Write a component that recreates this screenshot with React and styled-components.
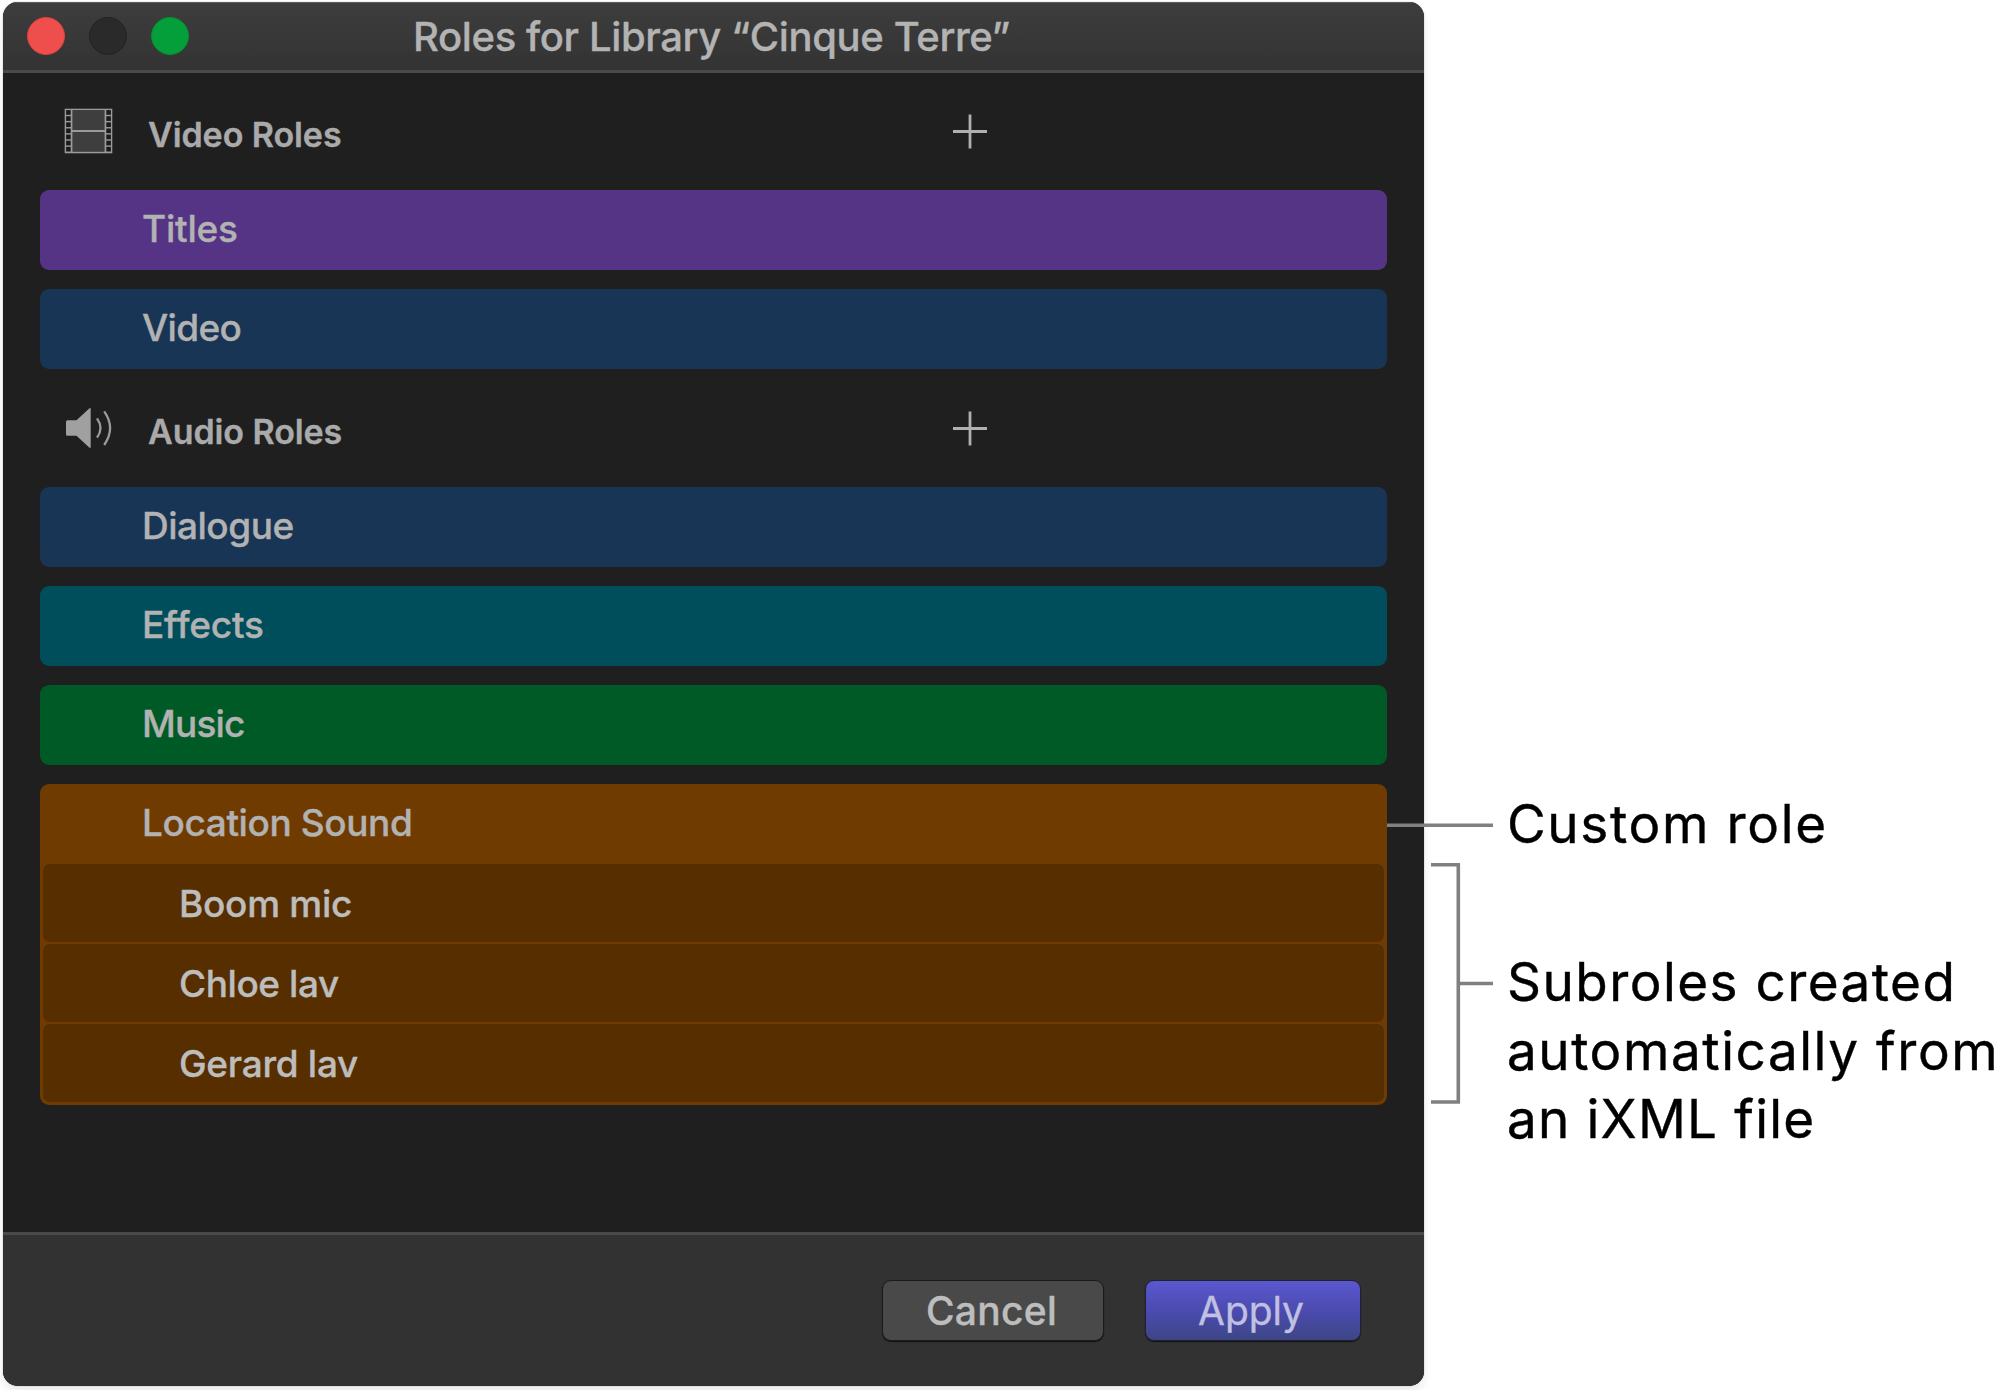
import React from "react";
import styled, { createGlobalStyle } from "styled-components";

const GlobalStyle = createGlobalStyle`
  *, *::before, *::after { box-sizing: border-box; }
  body {
    margin: 0;
    background: #fff;
    font-family: Inter, "Liberation Sans", sans-serif;
  }
`;

const Page = styled.main`
  display: flex;
  width: 2000px;
  height: 1390px;
  padding: 2px 0 0 3px;
  overflow: hidden;
`;

const Window = styled.section`
  display: flex;
  flex-direction: column;
  flex: none;
  width: 1421px;
  height: 1384px;
  border-radius: 15px;
  background: #1f1f1f;
  overflow: hidden;
  box-shadow: 0 0 1px #0009, 0 6px 10px #00000014;
  -webkit-text-stroke-width: 0.35px;
`;

const TitleBar = styled.header`
  display: flex;
  align-items: center;
  flex: none;
  height: 71px;
  padding: 0 24px 1px;
  border-top: 1px solid #5c5c5c;
  border-bottom: 3px solid #4a4a4a;
  background: linear-gradient(#3d3d3d, #333);
`;

const Lights = styled.div`
  display: flex;
  gap: 24px;
  width: 180px;
`;

const Light = styled.span`
  width: 38px;
  height: 38px;
  border-radius: 50%;
  border: 1px solid ${(p) => p.$rim};
  background: ${(p) => p.$color};
`;

const Title = styled.h1`
  flex: 1;
  margin: 1px 184px 0 0;
  color: #b3b3b3;
  font-size: 40px;
  font-weight: 500;
  line-height: 48px;
  letter-spacing: -0.37px;
  text-align: center;
  white-space: nowrap;
`;

const Body = styled.div`
  flex: 1;
  padding: 0 37px;
`;

const GroupHeader = styled.div`
  display: grid;
  grid-template-columns: 49px 1fr 34px 400px;
  align-items: center;
  height: ${(p) => p.$height}px;
  padding: 0 0 ${(p) => (p.$height === 117 ? 1 : 0)}px 24px;
`;

const GroupName = styled.h2`
  margin: 8px 0 0 35px;
  color: #aaa;
  font-size: 34px;
  font-weight: 600;
  line-height: 40px;
  letter-spacing: -0.08px;
`;

const AddButton = styled.button`
  display: flex;
  padding: 0;
  border: 0;
  background: none;
`;

const RoleList = styled.div`
  display: flex;
  flex-direction: column;
  gap: 19px;
`;

const Role = styled.div`
  border-radius: 9px;
  background: ${(p) => p.$color};
`;

const RoleName = styled.div`
  height: 80px;
  padding-left: 102px;
  color: #b2b2b2;
  font-size: 37px;
  font-weight: 500;
  line-height: 77px;
  letter-spacing: ${(p) => p.$tracking}px;
`;

const Subroles = styled.div`
  display: flex;
  flex-direction: column;
  gap: 2.5px;
  padding: 0 3px 3px;
`;

const Subrole = styled.div`
  height: 77.66px;
  padding-left: 136px;
  border-radius: 7px;
  background: #562e00;
  color: #bdbdbd;
  font-size: 37px;
  font-weight: 500;
  line-height: 79px;
  letter-spacing: ${(p) => p.$tracking}px;
`;

const Footer = styled.footer`
  display: flex;
  justify-content: flex-end;
  align-items: flex-start;
  gap: 41px;
  flex: none;
  height: 154px;
  padding: 45px 63px 0 0;
  border-top: 3px solid #4a4a4a;
  background: #323232;
`;

const Button = styled.button`
  width: ${(p) => (p.$primary ? 216 : 222)}px;
  height: 61px;
  padding: 0 ${(p) => (p.$primary ? 4 : 3)}px 0 0;
  border: 1px solid ${(p) => (p.$primary ? "#1f1f38" : "#1b1b1b")};
  border-radius: 9px;
  background: ${(p) => (p.$primary ? "linear-gradient(#5b58cf, #4b4bb0 50%, #3d4684)" : "#494949")};
  box-shadow: 0 1px 1px #111;
  color: ${(p) => (p.$primary ? "#c0c0e2" : "#bdbdbd")};
  font: ${(p) => (p.$primary ? 400 : 500)} 39px/58px Inter, "Liberation Sans", sans-serif;
  letter-spacing: ${(p) => (p.$primary ? -0.08 : 0.25)}px;
`;

const Callouts = styled.aside`
  position: relative;
  flex: none;
  width: 613px;
  margin-left: -37px;
  padding-top: 789px;
`;

const Callout = styled.div`
  display: flex;
  align-items: flex-start;
  gap: 14px;
  padding-left: ${(p) => p.$indent}px;
  height: ${(p) => p.$height}px;
`;

const Leader = styled.svg`
  flex: none;
  fill: none;
  stroke: #808080;
  stroke-width: 3.6;
`;

const CalloutText = styled.p`
  margin: ${(p) => p.$top}px 0 0;
  color: #000;
  font-size: 53px;
  line-height: 68.7px;
  white-space: nowrap;
  -webkit-text-stroke-width: 0.4px;
`;

const Line = styled.span`
  display: block;
  letter-spacing: ${(p) => p.$tracking}px;
`;

const holes = [0, 1, 2, 3, 4, 5, 6];

const FilmIcon = () => (
  <svg width="49" height="46" viewBox="0 0 49 46">
    <rect x="0.7" y="0.7" width="47.6" height="44.6" fill="#9a9a9a" />
    <rect x="8.4" y="2" width="32.2" height="20" fill="#3e3e3e" />
    <rect x="8.4" y="24" width="32.2" height="19.8" fill="#3e3e3e" />
    {holes.map((i) => (
      <React.Fragment key={i}>
        <rect x="2.1" y={2.1 + i * 6.12} width="4.6" height="4.7" fill="#1b1b1b" />
        <rect x="42.3" y={2.1 + i * 6.12} width="4.6" height="4.7" fill="#1b1b1b" />
      </React.Fragment>
    ))}
  </svg>
);

const SpeakerIcon = () => (
  <svg width="49" height="42" viewBox="0 0 49 42">
    <path d="M3.5 13.2H12.5L25.2 1.4Q26.7 0.3 26.7 2V40Q26.7 41.7 25.2 40.6L12.5 28.8H3.5Q2 28.8 2 27.3V14.7Q2 13.2 3.5 13.2Z" fill="#a0a0a0" />
    <path d="M33 11.3Q40 21 33 30.7M40.2 4.3Q52 21 40.2 38" fill="none" stroke="#9a9a9a" strokeWidth="2.3" />
  </svg>
);

const Add = ({ label }) => (
  <AddButton aria-label={label}>
    <svg width="34" height="35" viewBox="0 0 34 35">
      <path d="M17 0.5V34.5M0 17.5H34" stroke="#b0b0b0" strokeWidth="2.8" />
    </svg>
  </AddButton>
);

const videoRoles = [
  { name: "Titles", color: "#553486", tracking: -0.23 },
  { name: "Video", color: "#183556", tracking: -0.65 },
];

const audioRoles = [
  { name: "Dialogue", color: "#183556", tracking: -0.5 },
  { name: "Effects", color: "#004d5c", tracking: -0.21 },
  { name: "Music", color: "#005a26", tracking: -0.82 },
  {
    name: "Location Sound",
    color: "#703b00",
    tracking: -0.4,
    subroles: [
      { name: "Boom mic", tracking: -0.27 },
      { name: "Chloe lav", tracking: -0.43 },
      { name: "Gerard lav", tracking: -0.29 },
    ],
  },
];

const Roles = ({ roles }) => (
  <RoleList>
    {roles.map((r) => (
      <Role key={r.name} $color={r.color}>
        <RoleName $tracking={r.tracking}>{r.name}</RoleName>
        {r.subroles && (
          <Subroles>
            {r.subroles.map((s) => (
              <Subrole key={s.name} $tracking={s.tracking}>{s.name}</Subrole>
            ))}
          </Subroles>
        )}
      </Role>
    ))}
  </RoleList>
);

export default function App() {
  return (
    <Page>
      <GlobalStyle />
      <Window>
        <TitleBar>
          <Lights>
            <Light $color="#ee4e4c" $rim="#d94140" />
            <Light $color="#2a2a2a" $rim="#232323" />
            <Light $color="#049f3a" $rim="#058d34" />
          </Lights>
          <Title>Roles for Library “Cinque Terre”</Title>
        </TitleBar>
        <Body>
          <GroupHeader $height={117}>
            <FilmIcon />
            <GroupName>Video Roles</GroupName>
            <Add label="Add video role" />
          </GroupHeader>
          <Roles roles={videoRoles} />
          <GroupHeader $height={118}>
            <SpeakerIcon />
            <GroupName>Audio Roles</GroupName>
            <Add label="Add audio role" />
          </GroupHeader>
          <Roles roles={audioRoles} />
        </Body>
        <Footer>
          <Button>Cancel</Button>
          <Button $primary>Apply</Button>
        </Footer>
      </Window>
      <Callouts>
        <Callout $indent={0} $height={70}>
          <Leader width="106" height="70" viewBox="0 0 106 70">
            <path d="M0 34.2H106" />
          </Leader>
          <CalloutText $top={-1}>
            <Line $tracking={1.65}>Custom role</Line>
          </CalloutText>
        </Callout>
        <Callout $indent={44} $height={250}>
          <Leader width="62" height="250" viewBox="0 0 62 250">
            <path d="M0 3.7H27.3V241H0M27.3 122.5H62" />
          </Leader>
          <CalloutText $top={87}>
            <Line $tracking={1.46}>Subroles created</Line>
            <Line $tracking={1.56}>automatically from</Line>
            <Line $tracking={1.2}>an iXML file</Line>
          </CalloutText>
        </Callout>
      </Callouts>
    </Page>
  );
}
